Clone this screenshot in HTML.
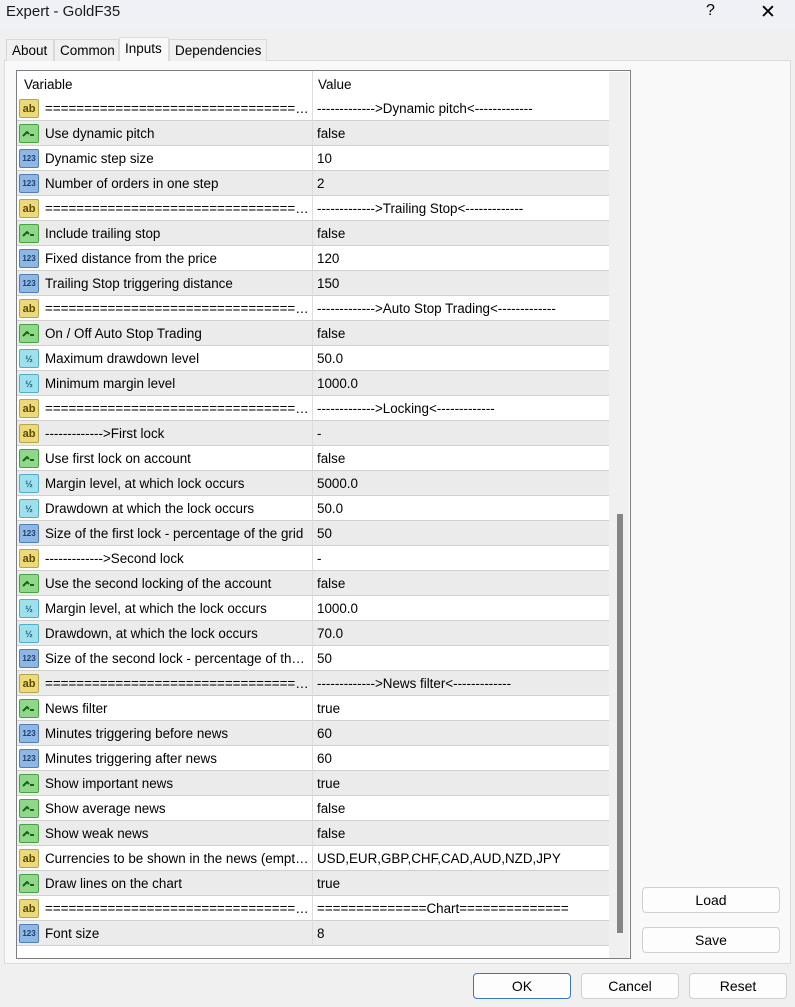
<!DOCTYPE html>
<html><head><style>
*{margin:0;padding:0;box-sizing:border-box}
body{width:795px;height:1007px;background:#f0f0f0;font-family:"Liberation Sans",sans-serif;font-size:13px;color:#000;position:relative;overflow:hidden}
.title{position:absolute;left:0;top:0;width:795px;height:29px;background:#eff1f7}
.title span{position:absolute;left:6px;top:3px;font-size:15px;color:#1a1a1a}
.q{position:absolute;left:706px;top:2px;font-size:16px}
.x{position:absolute;left:760px;top:1px;font-size:19px}
.tab{position:absolute;top:39px;height:22px;border:1px solid #d9d9d9;border-bottom:none;background:#f0f0f0;font-size:13.5px;padding:3px 5px 0}
.panel{position:absolute;left:4px;top:60px;width:787px;height:904px;background:#f9f9f9;border:1px solid #dcdcdc}
.list{position:absolute;left:16px;top:70px;width:615px;height:889px;border:1px solid #7b7f84;background:#fff;overflow:hidden}
.hdr{position:absolute;left:0;top:0;width:592px;height:25px;background:#fff}
.hdr span{position:absolute;top:6px;font-size:13.5px}
.vl{position:absolute;left:295px;top:0;width:1px;height:875px;background:#ddd}
.row{position:absolute;left:0;width:592px;height:25px;border-bottom:1px solid #cfcfcf}
.row.g{background:#ebebeb}
.row .n{position:absolute;left:28px;top:5px;white-space:nowrap;width:264px;overflow:hidden;text-overflow:ellipsis;font-size:13.4px}
.row .v{position:absolute;left:300px;top:5px;white-space:nowrap;font-size:13.4px}
.ic{position:absolute;left:2px;top:3px;width:20px;height:19px;border-radius:2px;font-size:9px;font-weight:bold;text-align:center;line-height:18px}
.ab{background:#ecd97a;border:1px solid #b7a54a;color:#5b4a00;font-size:11px}
.bl{background:#8fd88a;border:1px solid #47a33f}
.nm{background:#8fb7e4;border:1px solid #4f7fb8;color:#1d3f73;font-size:8px}
.fr{background:#9ee0ec;border:1px solid #4eaecb;color:#1a5d7a;font-size:9px}
.sb{position:absolute;left:592px;top:1px;width:20px;height:886px;background:#f0f0f0}
.th{position:absolute;left:600px;top:443px;width:6px;height:419px;background:#858585}
.btn{position:absolute;height:26px;border:1px solid #d0d0d0;border-radius:4px;background:#fdfdfd;text-align:center;line-height:24px;font-size:14px}
</style></head><body>
<div class="title"><span>Expert - GoldF35</span><div class="q">?</div><div class="x">✕</div></div>
<div class="panel"></div>
<div class="tab" style="left:6px;width:48px">About</div>
<div class="tab" style="left:54px;width:65px">Common</div>
<div class="tab" style="left:119px;top:37px;height:24px;width:50px;background:#f9f9f9;border-color:#dcdcdc">Inputs</div>
<div class="tab" style="left:169px;width:98px">Dependencies</div>
<div class="list">
<div class="hdr"><span style="left:7px">Variable</span><span style="left:301px">Value</span></div>
<div id="rows"></div>
<div class="vl"></div>
<div class="sb"></div><div class="th"></div>
</div>
<div class="btn" style="left:642px;top:887px;width:138px">Load</div>
<div class="btn" style="left:642px;top:927px;width:138px">Save</div>
<div class="btn" style="left:473px;top:973px;width:98px;border:1px solid #3a76c4">OK</div>
<div class="btn" style="left:581px;top:973px;width:98px">Cancel</div>
<div class="btn" style="left:689px;top:973px;width:98px">Reset</div>
<script>
var E="==========================================";
var R=[["ab",E,"------------->Dynamic pitch<-------------"],["bl","Use dynamic pitch","false"],["nm","Dynamic step size","10"],["nm","Number of orders in one step","2"],["ab",E,"------------->Trailing Stop<-------------"],["bl","Include trailing stop","false"],["nm","Fixed distance from the price","120"],["nm","Trailing Stop triggering distance","150"],["ab",E,"------------->Auto Stop Trading<-------------"],["bl","On / Off Auto Stop Trading","false"],["fr","Maximum drawdown level","50.0"],["fr","Minimum margin level","1000.0"],["ab",E,"------------->Locking<-------------"],["ab","------------->First lock","-"],["bl","Use first lock on account","false"],["fr","Margin level, at which lock occurs","5000.0"],["fr","Drawdown at which the lock occurs","50.0"],["nm","Size of the first lock - percentage of the grid","50"],["ab","------------->Second lock","-"],["bl","Use the second locking of the account","false"],["fr","Margin level, at which the lock occurs","1000.0"],["fr","Drawdown, at which the lock occurs","70.0"],["nm","Size of the second lock - percentage of the grid","50"],["ab",E,"------------->News filter<-------------"],["bl","News filter","true"],["nm","Minutes triggering before news","60"],["nm","Minutes triggering after news","60"],["bl","Show important news","true"],["bl","Show average news","false"],["bl","Show weak news","false"],["ab","Currencies to be shown in the news (empty - all)","USD,EUR,GBP,CHF,CAD,AUD,NZD,JPY"],["bl","Draw lines on the chart","true"],["ab",E,"==============Chart=============="],["nm","Font size","8"]];
var L={ab:"ab",bl:'<svg width="18" height="17" viewBox="0 0 18 17"><path d="M3 11 L7 7 L9 9 M10 10 L14 10" stroke="#1c5f17" stroke-width="2" fill="none"/></svg>',nm:"123",fr:"½"};
var h="";R.forEach(function(r,i){h+='<div class="row'+(i%2?' g':'')+'" style="top:'+(25+i*25)+'px"><div class="ic '+r[0]+'">'+L[r[0]]+'</div><span class="n">'+r[1]+'</span><span class="v">'+r[2]+'</span></div>'});
document.getElementById("rows").innerHTML=h;
</script>
</body></html>
